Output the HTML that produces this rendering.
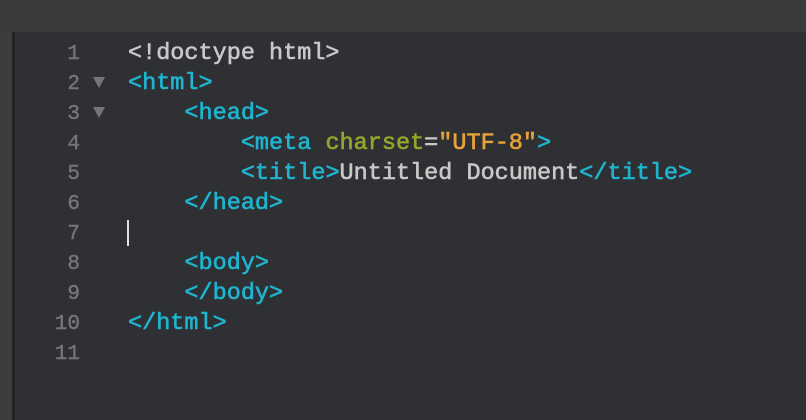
<!DOCTYPE html>
<html><head><meta charset="utf-8"><style>
html,body{margin:0;padding:0;width:806px;height:420px;overflow:hidden;background:#2f3034;}
.top{position:absolute;left:0;top:0;width:806px;height:32px;background:#3a3a3a;}
.strip{position:absolute;left:0;top:32px;width:12px;height:388px;background:#3d3d3d;}
.sep{position:absolute;left:12px;top:32px;width:3px;height:388px;background:#232325;}
.ln{position:absolute;left:20px;width:60px;text-align:right;font:21px "Liberation Mono",monospace;color:#767676;-webkit-text-stroke:0.4px #767676;}
.tri{position:absolute;left:93px;width:0;height:0;border-left:6px solid transparent;border-right:6px solid transparent;border-top:11px solid #767676;}
.code{position:absolute;left:128px;font:23.5px "Liberation Mono",monospace;color:#c8c8c8;white-space:pre;-webkit-text-stroke:0.6px;}
.t{color:#1fb5d0}.a{color:#93a82a}.s{color:#e8a23a}
.cur{position:absolute;left:127px;top:220px;width:2px;height:26px;background:#e0e0e0;}
</style></head><body>
<div class="top"></div><div class="strip"></div><div class="sep"></div>
<div class="ln" style="top:43px">1</div>
<div class="ln" style="top:73px">2</div>
<div class="ln" style="top:103px">3</div>
<div class="ln" style="top:133px">4</div>
<div class="ln" style="top:163px">5</div>
<div class="ln" style="top:193px">6</div>
<div class="ln" style="top:223px">7</div>
<div class="ln" style="top:253px">8</div>
<div class="ln" style="top:283px">9</div>
<div class="ln" style="top:313px">10</div>
<div class="ln" style="top:343px">11</div>
<div class="tri" style="top:77px"></div>
<div class="tri" style="top:107px"></div>
<div class="code" style="top:40px">&lt;!doctype html&gt;</div>
<div class="code" style="top:70px"><span class="t">&lt;html&gt;</span></div>
<div class="code" style="top:100px">    <span class="t">&lt;head&gt;</span></div>
<div class="code" style="top:130px">        <span class="t">&lt;meta </span><span class="a">charset</span>=<span class="s">"UTF-8"</span><span class="t">&gt;</span></div>
<div class="code" style="top:160px">        <span class="t">&lt;title&gt;</span>Untitled Document<span class="t">&lt;/title&gt;</span></div>
<div class="code" style="top:190px">    <span class="t">&lt;/head&gt;</span></div>
<div class="cur"></div>
<div class="code" style="top:250px">    <span class="t">&lt;body&gt;</span></div>
<div class="code" style="top:280px">    <span class="t">&lt;/body&gt;</span></div>
<div class="code" style="top:310px"><span class="t">&lt;/html&gt;</span></div>
</body></html>
